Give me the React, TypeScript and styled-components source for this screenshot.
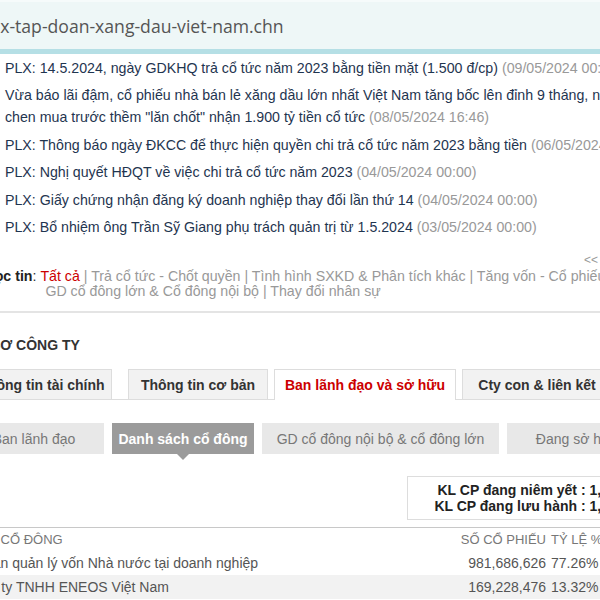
import styled, { createGlobalStyle } from "styled-components";

const GlobalStyle = createGlobalStyle`
  html, body {
    margin: 0;
    padding: 0;
    background: #fff;
  }
  body {
    font-family: "Liberation Sans", Arial, sans-serif;
    font-size: 14px;
    color: #333;
  }
`;

const news = [
  {
    title: "PLX: 14.5.2024, ngày GDKHQ trả cổ tức năm 2023 bằng tiền mặt (1.500 đ/cp)",
    date: "09/05/2024 00:00",
  },
  {
    title:
      "Vừa báo lãi đậm, cổ phiếu nhà bán lẻ xăng dầu lớn nhất Việt Nam tăng bốc lên đỉnh 9 tháng, nhà đầu tư",
    more: 'chen mua trước thềm "lăn chốt" nhận 1.900 tỷ tiền cổ tức',
    date: "08/05/2024 16:46",
  },
  {
    title: "PLX: Thông báo ngày ĐKCC để thực hiện quyền chi trả cổ tức năm 2023 bằng tiền",
    date: "06/05/2024 00:00",
  },
  { title: "PLX: Nghị quyết HĐQT về việc chi trả cổ tức năm 2023", date: "04/05/2024 00:00" },
  {
    title: "PLX: Giấy chứng nhận đăng ký doanh nghiệp thay đổi lần thứ 14",
    date: "04/05/2024 00:00",
  },
  {
    title: "PLX: Bổ nhiệm ông Trần Sỹ Giang phụ trách quản trị từ 1.5.2024",
    date: "03/05/2024 00:00",
  },
];

const tabs = [
  { label: "Thông tin tài chính", width: 140 },
  { label: "Thông tin cơ bản", width: 140 },
  { label: "Ban lãnh đạo và sở hữu", width: 182, active: true },
  { label: "Cty con & liên kết", width: 150 },
];

const pills = [
  { label: "Ban lãnh đạo", width: 140 },
  { label: "Danh sách cổ đông", width: 142, active: true },
  { label: "GD cổ đông nội bộ & cổ đông lớn", width: 237 },
  { label: "Đang sở hữu", width: 140 },
];

const holders = [
  { name: "Ủy ban quản lý vốn Nhà nước tại doanh nghiệp", shares: "981,686,626", pct: "77.26%" },
  { name: "Công ty TNHH ENEOS Việt Nam", shares: "169,228,476", pct: "13.32%" },
];

const App = () => {
  return (
    <>
      <GlobalStyle />
      <Viewport>
        <UrlBar>
          <UrlText>plx-tap-doan-xang-dau-viet-nam.chn</UrlText>
        </UrlBar>
        <Band />

        <NewsList>
          {news.map((n) => (
            <NewsItem key={n.title}>
              {n.title}
              {n.more && (
                <>
                  <br />
                  {n.more}
                </>
              )}{" "}
              <NewsDate>({n.date})</NewsDate>
            </NewsItem>
          ))}
        </NewsList>

        <Pager>
          <span>&lt;&lt;</span>
          <span>&gt;&gt;</span>
        </Pager>

        <Filter>
          <FilterLabel>Lọc tin</FilterLabel>
          <span>:&nbsp;</span>
          <FilterLines>
            <div>
              <FilterLink $active>Tất cả</FilterLink>
              <Pipe> | </Pipe>
              <FilterLink>Trả cổ tức - Chốt quyền</FilterLink>
              <Pipe> | </Pipe>
              <FilterLink>Tình hình SXKD &amp; Phân tích khác</FilterLink>
              <Pipe> | </Pipe>
              <FilterLink>Tăng vốn - Cổ phiếu quỹ</FilterLink>
              <Pipe> |</Pipe>
            </div>
            <FilterWrap>
              <FilterLink>GD cổ đông lớn &amp; Cổ đông nội bộ</FilterLink>
              <Pipe> | </Pipe>
              <FilterLink>Thay đổi nhân sự</FilterLink>
            </FilterWrap>
          </FilterLines>
        </Filter>

        <Divider />

        <Company>
          <SectionTitle>HỒ SƠ CÔNG TY</SectionTitle>

          <Tabs>
            {tabs.map((t) => (
              <Tab key={t.label} $width={t.width} $active={t.active}>
                {t.label}
              </Tab>
            ))}
          </Tabs>

          <Pills>
            {pills.map((p) => (
              <Pill key={p.label} $width={p.width} $active={p.active}>
                {p.label}
              </Pill>
            ))}
          </Pills>

          <InfoRow>
            <InfoBox>
              <div>KL CP đang niêm yết : 1,293,878,081</div>
              <div>KL CP đang lưu hành : 1,270,592,235</div>
            </InfoBox>
          </InfoRow>

          <Table>
            <HeadRow>
              <NameCell $head>Tên cổ đông</NameCell>
              <NumCell>Số cổ phiếu</NumCell>
              <PctCell>Tỷ lệ %</PctCell>
            </HeadRow>
            {holders.map((h, i) => (
              <Row key={h.name} $shaded={i % 2 === 1}>
                <NameCell>{h.name}</NameCell>
                <NumCell>{h.shares}</NumCell>
                <PctCell>{h.pct}</PctCell>
              </Row>
            ))}
          </Table>
        </Company>
      </Viewport>
    </>
  );
};

const Viewport = styled.div`
  width: 600px;
  height: 600px;
  overflow: hidden;
  background: #fff;
`;

const UrlBar = styled.div`
  height: 49px;
  box-sizing: border-box;
  display: flex;
  align-items: center;
  background: #eef7f7;
  border-top: 2px solid #f6fbfb;
`;

const UrlText = styled.span`
  margin-left: -15px;
  font-family: "Open Sans", "Noto Sans", sans-serif;
  font-size: 17.6px;
  color: #555;
  white-space: nowrap;
`;

const Band = styled.div`
  height: 5px;
  background: #b5dfe5;
`;

const NewsList = styled.ul`
  list-style: none;
  margin: 0;
  padding: 0 0 0 5px;
`;

const NewsItem = styled.li`
  padding: 2.75px 0;
  line-height: 22px;
  font-size: 14.2px;
  color: #1f3550;
  white-space: nowrap;
`;

const NewsDate = styled.span`
  color: #999;
`;

const Pager = styled.div`
  display: flex;
  justify-content: flex-end;
  gap: 4px;
  margin: 11px -16px 0 0;
  height: 16px;
  line-height: 16px;
  font-size: 12px;
  color: #999;
`;

const Filter = styled.div`
  display: flex;
  margin: 1px 0 0 -14px;
  line-height: 15px;
  font-size: 14.2px;
  white-space: nowrap;
  color: #333;
`;

const FilterLabel = styled.span`
  font-weight: bold;
  color: #222;
`;

const FilterLines = styled.div`
  display: flex;
  flex-direction: column;
`;

const FilterWrap = styled.div`
  padding-left: 5px;
`;

const FilterLink = styled.span<{ $active?: boolean }>`
  color: ${(p) => (p.$active ? "#cc0000" : "#999")};
  cursor: pointer;
`;

const Pipe = styled.span`
  color: #999;
  white-space: pre;
`;

const Divider = styled.div`
  height: 2px;
  margin-top: 12px;
  background: #e4e4e4;
`;

const Company = styled.div`
  width: 720px;
  margin-left: -36px;
`;

const SectionTitle = styled.div`
  margin-top: 23px;
  padding-left: 2px;
  line-height: 18px;
  font-size: 14px;
  font-weight: bold;
  color: #333;
  white-space: nowrap;
`;

const Tabs = styled.div`
  display: flex;
  gap: 6px;
  margin-top: 15px;
  padding-left: 8px;
  border-bottom: 1px solid #ddd;
`;

const Tab = styled.div<{ $active?: boolean; $width: number }>`
  width: ${(p) => p.$width}px;
  height: ${(p) => (p.$active ? 31 : 30)}px;
  margin-bottom: ${(p) => (p.$active ? -1 : 0)}px;
  box-sizing: border-box;
  display: flex;
  align-items: center;
  justify-content: center;
  flex-shrink: 0;
  border: 1px solid #ddd;
  border-bottom: none;
  background: ${(p) => (p.$active ? "#fff" : "#f2f2f2")};
  color: ${(p) => (p.$active ? "#cc0000" : "#333")};
  font-size: 14px;
  font-weight: bold;
  white-space: nowrap;
  cursor: pointer;

  &:first-child {
    margin-right: 10px;
  }
`;

const Pills = styled.div`
  display: flex;
  gap: 8px;
  margin-top: 23px;
`;

const Pill = styled.div<{ $active?: boolean; $width: number }>`
  position: relative;
  width: ${(p) => p.$width}px;
  height: 31px;
  flex-shrink: 0;
  display: flex;
  align-items: center;
  justify-content: center;
  background: ${(p) => (p.$active ? "#9b9b9b" : "#e8e8e8")};
  color: ${(p) => (p.$active ? "#fff" : "#777")};
  font-size: 14px;
  font-weight: ${(p) => (p.$active ? "bold" : "normal")};
  white-space: nowrap;
  cursor: pointer;

  ${(p) =>
    p.$active &&
    `
    &::after {
      content: "";
      position: absolute;
      left: 50%;
      bottom: -6px;
      margin-left: -6px;
      border-left: 6px solid transparent;
      border-right: 6px solid transparent;
      border-top: 6px solid #9b9b9b;
    }
  `}
`;

const InfoRow = styled.div`
  display: flex;
  justify-content: flex-end;
  margin-top: 22px;
`;

const InfoBox = styled.div`
  padding: 5px 4px 5px 26px;
  border: 1px solid #ddd;
  line-height: 16px;
  font-size: 14px;
  font-weight: bold;
  color: #222;
  text-align: right;
  white-space: nowrap;
`;

const Table = styled.div`
  margin-top: 7px;
  border-top: 1px solid #c8c8c8;
`;

const Row = styled.div<{ $shaded?: boolean }>`
  display: grid;
  grid-template-columns: 1fr 120px 138px;
  align-items: center;
  height: 24px;
  background: ${(p) => (p.$shaded ? "#f2f2f2" : "transparent")};
  font-size: 14px;
  color: #555;
  white-space: nowrap;
`;

const HeadRow = styled(Row)`
  height: 23px;
  font-size: 13px;
  color: #777;
  text-transform: uppercase;
`;

const NameCell = styled.div<{ $head?: boolean }>`
  padding-left: ${(p) => (p.$head ? 7 : 0)}px;
`;

const NumCell = styled.div`
  text-align: right;
`;

const PctCell = styled.div`
  padding-left: 5px;
`;

export default App;
